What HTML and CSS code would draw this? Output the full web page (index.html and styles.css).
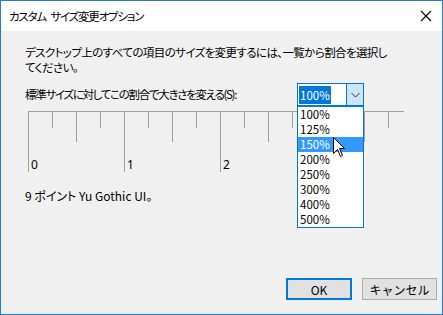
FILE: index.html
```html
<!DOCTYPE html>
<html lang="ja">
<head>
    <meta charset="UTF-8">
    <title>カスタム サイズ変更オプション</title>
    <link rel="stylesheet" href="styles.css">
</head>
<body>
    <div class="window">
        <div class="titlebar">
            <span class="title">カスタム サイズ変更オプション</span>
            <svg class="close" width="12" height="12" viewBox="0 0 12 12">
                <path d="M1 1 L11 11 M11 1 L1 11" stroke="#000" stroke-width="1.1" fill="none"/>
            </svg>
        </div>
        <div class="content">
            <p class="desc">デスクトップ上のすべての項目のサイズを変更するには、一覧から割合を選択し<br>てください。</p>
            <div class="scale-row">
                <label class="scale-label">標準サイズに対してこの割合で大きさを変える(S):</label>
                <div class="combo">
                    <div class="combo-box">
                        <span class="combo-value"><span class="sel">100%</span></span>
                        <span class="combo-btn">
                            <svg width="9" height="6" viewBox="0 0 9 6"><path d="M0.5 1 L4.5 5 L8.5 1" stroke="#333" fill="none"/></svg>
                        </span>
                    </div>
                    <ul class="combo-list">
                        <li>100%</li>
                        <li>125%</li>
                        <li class="hover">150%</li>
                        <li>200%</li>
                        <li>250%</li>
                        <li>300%</li>
                        <li>400%</li>
                        <li>500%</li>
                    </ul>
                    <svg class="cursor" width="13" height="21" viewBox="0 0 13 21">
                        <path d="M0.5 0.5 L0.5 16.5 L4.5 12.5 L7.5 19.5 L9.5 18.5 L6.5 11.5 L11.5 11.5 Z" fill="#fff" stroke="#000" stroke-width="1"/>
                    </svg>
                </div>
            </div>
            <svg class="ruler" width="376" height="62" viewBox="0 0 376 62">
                <g stroke="#a0a0a0" stroke-width="1">
                    <line x1="0" y1="0.5" x2="376" y2="0.5"/>
                    <line x1="0.5" y1="0" x2="0.5" y2="61"/>
                    <line x1="24.5" y1="0" x2="24.5" y2="17"/>
                    <line x1="48.5" y1="0" x2="48.5" y2="31"/>
                    <line x1="72.5" y1="0" x2="72.5" y2="17"/>
                    <line x1="96.5" y1="0" x2="96.5" y2="61"/>
                    <line x1="120.5" y1="0" x2="120.5" y2="17"/>
                    <line x1="144.5" y1="0" x2="144.5" y2="31"/>
                    <line x1="168.5" y1="0" x2="168.5" y2="17"/>
                    <line x1="192.5" y1="0" x2="192.5" y2="61"/>
                    <line x1="216.5" y1="0" x2="216.5" y2="17"/>
                    <line x1="240.5" y1="0" x2="240.5" y2="31"/>
                    <line x1="264.5" y1="0" x2="264.5" y2="17"/>
                    <line x1="288.5" y1="0" x2="288.5" y2="61"/>
                    <line x1="312.5" y1="0" x2="312.5" y2="17"/>
                    <line x1="336.5" y1="0" x2="336.5" y2="31"/>
                    <line x1="360.5" y1="0" x2="360.5" y2="17"/>
                </g>
                <g class="ruler-num">
                    <text x="3" y="58">0</text>
                    <text x="99" y="58">1</text>
                    <text x="195" y="58">2</text>
                </g>
            </svg>
            <p class="font-info">9 ポイント Yu Gothic UI。</p>
            <div class="buttons">
                <button class="btn btn-default">OK</button>
                <button class="btn">キャンセル</button>
            </div>
        </div>
    </div>
</body>
</html>
```
FILE: styles.css
```css
body {
    margin: 0;
    font-family: "Noto Sans CJK JP", "Noto Sans", sans-serif;
    font-size: 11.5px;
    color: #000;
    background: #f0f0f0;
}
.window {
    width: 443px;
    height: 315px;
    box-sizing: border-box;
    border: 1px solid #2b7bc4;
    display: flex;
    flex-direction: column;
}
.titlebar {
    height: 30px;
    background: #fff;
    display: flex;
    align-items: center;
    justify-content: space-between;
    padding: 0 10px 0 8px;
    flex-shrink: 0;
}
.title {
    font-feature-settings: "palt";
    letter-spacing: -1.2px;
    word-spacing: 3px;
}
.content {
    flex: 1;
    background: #f0f0f0;
    padding: 14px 4px 14px 24px;
    display: flex;
    flex-direction: column;
    font-feature-settings: "palt";
}
.desc {
    margin: 0;
    line-height: 15px;
    letter-spacing: -0.6px;
}
.scale-row {
    display: flex;
    align-items: center;
    margin-top: 8px;
}
.scale-label {
    width: 272px;
    line-height: 15px;
    letter-spacing: -1.3px;
}
.combo {
    position: relative;
}
.combo-box {
    width: 67px;
    height: 23px;
    box-sizing: border-box;
    border: 1px solid #0078d7;
    background: #fff;
    display: flex;
}
.combo-value {
    flex: 1;
    display: flex;
    align-items: center;
    padding-left: 1px;
}
.sel {
    background: #0078d7;
    color: #fff;
    line-height: 18px;
    padding: 0 1px;
}
.combo-btn {
    width: 16px;
    border-left: 1px solid #0078d7;
    background: #cce4f7;
    display: flex;
    align-items: center;
    justify-content: center;
}
.combo-list {
    position: absolute;
    top: 23px;
    left: 0;
    width: 67px;
    box-sizing: border-box;
    margin: 0;
    padding: 0;
    list-style: none;
    background: #fff;
    border: 1px solid #0078d7;
    z-index: 2;
}
.combo-list li {
    height: 15px;
    line-height: 15px;
    padding-left: 2px;
    font-size: 11.5px;
}
.combo-list li.hover {
    background: #3399ff;
    color: #fff;
}
.cursor {
    position: absolute;
    left: 36px;
    top: 54px;
    z-index: 3;
}
.ruler {
    display: block;
    margin: 5px 0 0 3px;
    overflow: visible;
}
.ruler-num text {
    font-family: "Noto Sans", sans-serif;
    font-size: 12px;
    fill: #000;
}
.font-info {
    margin: 15px 0 0;
    line-height: 15px;
    font-size: 12px;
}
.buttons {
    margin-top: auto;
    display: flex;
    justify-content: flex-end;
    gap: 10px;
    padding-right: 1px;
}
.btn {
    font-family: inherit;
    font-size: 12px;
    height: 22px;
    width: 75px;
    padding: 0;
    background: #e1e1e1;
    border: 1px solid #adadad;
    color: #000;
}
.btn-default {
    width: 66px;
    border: 2px solid #0078d7;
}
```
